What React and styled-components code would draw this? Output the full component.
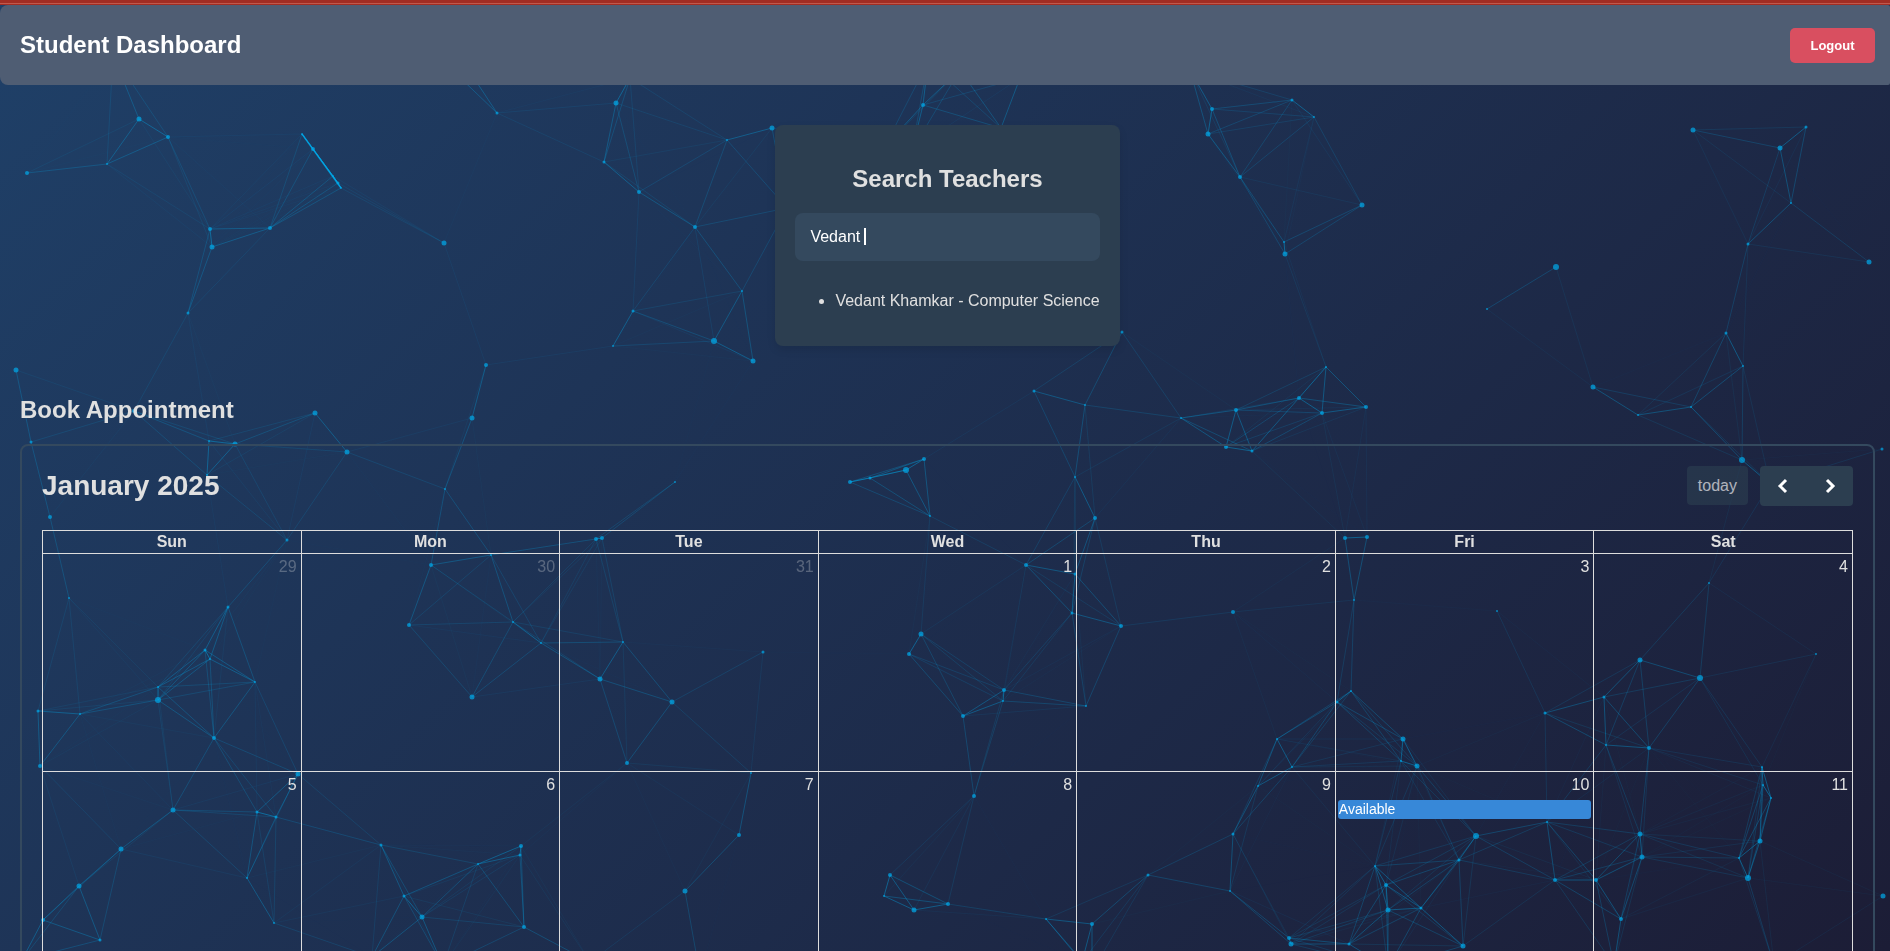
import React, { useState } from "react";
import styled, { createGlobalStyle } from "styled-components";

const GlobalStyle = createGlobalStyle`
  *, *::before, *::after { box-sizing: border-box; }
  body {
    margin: 0;
    background: #1c1d36;
    color: #e0e0e0;
    font-family: "Liberation Sans", Arial, sans-serif;
    font-size: 16px;
  }
`;

/* Particle field: [x, y, radius] */
const PARTICLES = [
  [113, 55, 2], [139, 119, 2.5], [168, 137, 2], [107, 164, 1], [27, 173, 2], [302, 134, 1],
  [313, 149, 2], [333, 176, 1], [338, 183, 1.5], [341, 188, 1], [270, 228, 2], [210, 229, 2],
  [212, 247, 2.5], [188, 313, 1.5], [444, 243, 2.5], [450, 68, 2], [466, 66, 2], [497, 113, 1.5],
  [616, 103, 2.5], [630, 78, 2], [604, 162, 1.5], [639, 192, 2], [727, 140, 1], [772, 128, 2.5],
  [787, 208, 2], [695, 227, 2], [742, 291, 1], [633, 311, 1.5], [613, 346, 1], [714, 341, 3],
  [753, 361, 2.5], [486, 365, 2], [923, 105, 2], [928, 62, 2], [960, 70, 2], [1001, 128, 2],
  [1020, 78, 2], [885, 146, 2], [912, 150, 2], [1122, 332, 1.5], [1034, 391, 1.5], [1085, 405, 1],
  [1181, 418, 1], [1236, 410, 2], [1226, 447, 2], [1252, 451, 1.5], [1299, 398, 2], [924, 459, 2],
  [906, 470, 3], [870, 478, 1.5], [850, 482, 2], [930, 516, 1], [1075, 477, 1], [1095, 518, 2],
  [1026, 565, 2], [1075, 574, 1.5], [1072, 613, 1.5], [1121, 626, 2], [1233, 612, 2],
  [921, 634, 2.5], [909, 654, 2], [1190, 70, 2], [1212, 109, 2], [1208, 134, 2.5],
  [1292, 100, 1.5], [1314, 117, 1], [1240, 177, 2], [1362, 205, 2.5], [1284, 242, 1],
  [1285, 254, 2.5], [1693, 130, 2.5], [1780, 148, 2.5], [1806, 127, 1.5], [1791, 203, 1],
  [1748, 244, 1.5], [1869, 262, 2.5], [1556, 267, 3], [1487, 309, 1], [1726, 333, 1.5],
  [1743, 366, 1], [1691, 407, 1], [1593, 387, 2.5], [1638, 415, 1], [1742, 460, 3],
  [1770, 484, 2], [1882, 449, 1.5], [1326, 367, 1], [1366, 407, 2], [1322, 413, 2],
  [134, 411, 2], [31, 442, 1.5], [16, 370, 2.5], [209, 441, 1], [235, 444, 2.5], [315, 413, 2.5],
  [347, 452, 2.5], [207, 475, 1], [50, 517, 2], [287, 540, 1.5], [69, 598, 1], [445, 489, 1],
  [472, 418, 2.5], [431, 565, 2], [409, 625, 2], [228, 607, 1.5], [205, 650, 1.5], [210, 659, 1],
  [255, 682, 1], [158, 687, 1], [158, 700, 3], [472, 697, 2.5], [38, 711, 1.5], [80, 714, 1],
  [40, 766, 2], [214, 738, 2], [298, 774, 2.5], [173, 810, 2.5], [257, 812, 1.5], [276, 817, 1.5],
  [121, 849, 2.5], [79, 886, 2.5], [43, 920, 2], [100, 940, 1.5], [247, 878, 1], [274, 923, 1],
  [381, 845, 1.5], [404, 896, 1.5], [422, 917, 2.5], [478, 864, 1], [22, 960, 2], [372, 957, 2],
  [443, 966, 2], [491, 555, 1], [513, 622, 1], [541, 643, 1], [600, 679, 2.5], [623, 642, 1],
  [672, 702, 2.5], [763, 652, 1.5], [627, 763, 2], [751, 773, 1], [739, 835, 2], [685, 891, 2.5],
  [521, 846, 2], [520, 855, 1.5], [524, 927, 2], [596, 539, 2], [602, 538, 2], [675, 482, 1],
  [1086, 706, 1], [1004, 690, 2], [1003, 701, 1], [963, 716, 2], [974, 796, 2], [890, 875, 2],
  [884, 896, 1], [914, 910, 2.5], [948, 904, 2], [1046, 919, 1], [1092, 924, 2], [1082, 962, 2],
  [1092, 972, 2], [590, 962, 2], [700, 975, 2], [1351, 691, 1], [1337, 702, 1.5], [1277, 739, 1],
  [1292, 767, 1], [1403, 739, 2.5], [1401, 761, 1], [1417, 766, 2.5], [1258, 786, 1],
  [1233, 834, 1.5], [1230, 891, 1], [1289, 938, 2], [1291, 944, 2.5], [1349, 944, 1.5],
  [1375, 866, 1], [1386, 885, 2], [1388, 910, 2.5], [1421, 908, 1.5], [1459, 860, 1.5],
  [1476, 836, 3], [1463, 946, 2.5], [1547, 822, 1], [1555, 880, 2], [1545, 713, 1.5],
  [1596, 880, 2], [1148, 875, 1.5], [1388, 968, 2], [1640, 660, 2.5], [1700, 678, 3],
  [1709, 583, 1], [1816, 654, 1], [1604, 697, 1.5], [1606, 745, 1], [1649, 748, 2],
  [1762, 767, 1], [1763, 785, 1], [1771, 798, 1], [1760, 841, 2.5], [1739, 858, 1],
  [1748, 878, 3], [1640, 834, 2.5], [1642, 857, 2.5], [1621, 919, 2], [1883, 896, 2.5],
  [1774, 965, 2], [1614, 965, 2], [1345, 538, 2], [1367, 537, 2], [1354, 600, 1], [1497, 611, 1],
];

const LINK_DISTANCE = 150;

const LINKS = PARTICLES.flatMap(([x1, y1], i) =>
  PARTICLES.slice(i + 1).flatMap(([x2, y2]) => {
    const distance = Math.hypot(x2 - x1, y2 - y1);
    if (distance >= LINK_DISTANCE) return [];
    return [{ x1, y1, x2, y2, opacity: 0.5 * (1 - distance / LINK_DISTANCE) }];
  })
);

const Backdrop = styled.div`
  position: fixed;
  inset: 0;
  z-index: -1;
  background: linear-gradient(135deg, #1f4068, #1c1d36);

  svg { display: block; width: 100%; height: 100%; }
`;

function ParticleField() {
  return (
    <Backdrop aria-hidden="true">
      <svg>
        <g stroke="#00aaea">
          {LINKS.map((link, i) => (
            <line key={i} x1={link.x1} y1={link.y1} x2={link.x2} y2={link.y2} strokeOpacity={link.opacity} />
          ))}
          <line x1="302" y1="134" x2="341" y2="188" strokeOpacity="0.7" strokeWidth="1.5" />
        </g>
        <g fill="#00aaea" fillOpacity="0.7">
          {PARTICLES.map(([x, y, r], i) => (
            <circle key={i} cx={x} cy={y} r={r} />
          ))}
        </g>
      </svg>
    </Backdrop>
  );
}

const Page = styled.div`
  height: 100vh;
  overflow-y: auto;
  scrollbar-width: none;
`;

const TopStrip = styled.div`
  height: 5px;
  background: linear-gradient(#a12d23 3px, #c0594c 3px, #c0594c 4px, #a12d23 4px);
`;

const Header = styled.header`
  display: flex;
  align-items: center;
  justify-content: space-between;
  height: 80px;
  padding: 0 15px 0 20px;
  border-radius: 8px 2px 2px 8px;
  background: #4f5d73;
`;

const Title = styled.h1`
  margin: 0;
  color: #fff;
  font-size: 24px;
  line-height: 28px;
`;

const LogoutButton = styled.button`
  min-width: 85px;
  height: 35px;
  padding: 0 20px;
  border: 0;
  border-radius: 5px;
  background: #d94f60;
  color: #fff;
  font: bold 13px/15px "Liberation Sans", Arial, sans-serif;
  cursor: pointer;
`;

const Main = styled.main`
  display: flex;
  flex-direction: column;
  padding: 40px 15px 40px 20px;
`;

const SectionTitle = styled.h2`
  margin: 0 0 20px;
  font-size: 24px;
  line-height: 28px;
  text-align: ${(p) => p.$align || "left"};
`;

const SearchCard = styled.section`
  align-self: center;
  margin-bottom: 50px;
  padding: 40px 20px 36px;
  border-radius: 8px;
  background: #2c3e50;
  box-shadow: 0 4px 8px rgba(0, 0, 0, 0.1);
`;

const SearchField = styled.div`
  position: relative;
  display: flex;
  margin-bottom: 31px;
`;

const SearchInput = styled.input`
  flex: 1;
  width: 100%;
  min-width: 0;
  height: 48px;
  padding: 0 15px;
  border: 0;
  border-radius: 8px;
  outline: 0;
  background: #34495e;
  color: #fff;
  caret-color: transparent;
  font: 16px "Liberation Sans", Arial, sans-serif;
`;

const Caret = styled.span`
  position: absolute;
  left: 69px;
  top: 15px;
  width: 2px;
  height: 17px;
  background: #fff;
`;

const TeacherList = styled.ul`
  margin: 0;
  padding-left: 40px;
  line-height: 18px;
`;

const Calendar = styled.div`
  padding: 20px;
  border: 2px solid #34495e;
  border-radius: 8px;
`;

const Toolbar = styled.div`
  display: flex;
  align-items: center;
  justify-content: space-between;
  height: 40px;
  margin-bottom: 24px;
`;

const MonthTitle = styled.h2`
  margin: 0;
  font-size: 28px;
  line-height: 32px;
`;

const ToolbarActions = styled.div`
  display: flex;
  align-items: flex-start;
  gap: 12px;
`;

const TodayButton = styled.button`
  height: 39px;
  padding: 0 11px;
  border: 0;
  border-radius: 4px;
  background: #2c3e50;
  color: #fff;
  font: 16px "Liberation Sans", Arial, sans-serif;
  opacity: 0.65;
`;

const ArrowGroup = styled.div`
  display: flex;
  gap: 1px;
  overflow: hidden;
  border-radius: 4px;
  background: #2c3e50;
`;

const ArrowButton = styled.button`
  display: flex;
  align-items: center;
  justify-content: center;
  width: 46px;
  height: 40px;
  padding: 0;
  border: 0;
  background: transparent;
  color: #fff;
  cursor: pointer;
`;

const Grid = styled.table`
  width: 100%;
  border-collapse: collapse;
  table-layout: fixed;
`;

const DayHead = styled.th`
  height: 23px;
  padding: 0;
  border: 1px solid #ddd;
  font-weight: bold;
  line-height: 18px;
`;

const DayCell = styled.td`
  height: 218px;
  padding: 0;
  border: 1px solid #ddd;
  vertical-align: top;
`;

const DayNumber = styled.div`
  padding: 4px;
  line-height: 18px;
  text-align: right;
  opacity: ${(p) => (p.$outside ? 0.3 : 1)};
`;

const EventBar = styled.a`
  display: block;
  height: 19px;
  margin: 2px 2px 0;
  padding: 0 1px;
  border-radius: 3px;
  background: #3788d8;
  color: #fff;
  font-size: 14px;
  line-height: 18px;
  text-decoration: none;
`;

const WEEKDAYS = ["Sun", "Mon", "Tue", "Wed", "Thu", "Fri", "Sat"];
const EVENTS = { 10: "Available" };
const WEEK_COUNT = 2;

/* January 2025 starts on a Wednesday, so the grid opens with three December days. */
const WEEKS = Array.from({ length: WEEK_COUNT }, (_, week) =>
  Array.from({ length: 7 }, (_, weekday) => {
    const offset = week * 7 + weekday - 2;
    if (offset < 1) return { day: offset + 31, outside: true };
    return { day: offset, outside: false };
  })
);

function Chevron({ points }) {
  return (
    <svg width="24" height="24" viewBox="0 0 24 24" fill="none" stroke="currentColor" strokeWidth="3" aria-hidden="true">
      <polyline points={points} />
    </svg>
  );
}

export default function App() {
  const [query, setQuery] = useState("Vedant ");

  return (
    <>
      <GlobalStyle />
      <ParticleField />
      <Page>
        <TopStrip />
        <Header>
          <Title>Student Dashboard</Title>
          <LogoutButton type="button">Logout</LogoutButton>
        </Header>
        <Main>
          <SearchCard>
            <SectionTitle $align="center">Search Teachers</SectionTitle>
            <SearchField>
              <SearchInput
                type="text"
                aria-label="Search teachers"
                size="1"
                value={query}
                onChange={(e) => setQuery(e.target.value)}
              />
              <Caret />
            </SearchField>
            <TeacherList>
              <li>Vedant Khamkar - Computer Science</li>
            </TeacherList>
          </SearchCard>

          <SectionTitle>Book Appointment</SectionTitle>
          <Calendar>
            <Toolbar>
              <MonthTitle>January 2025</MonthTitle>
              <ToolbarActions>
                <TodayButton type="button" disabled>today</TodayButton>
                <ArrowGroup>
                  <ArrowButton type="button" aria-label="Previous month">
                    <Chevron points="15,6 9,12 15,18" />
                  </ArrowButton>
                  <ArrowButton type="button" aria-label="Next month">
                    <Chevron points="9,6 15,12 9,18" />
                  </ArrowButton>
                </ArrowGroup>
              </ToolbarActions>
            </Toolbar>
            <Grid>
              <thead>
                <tr>
                  {WEEKDAYS.map((name) => (
                    <DayHead key={name} scope="col">{name}</DayHead>
                  ))}
                </tr>
              </thead>
              <tbody>
                {WEEKS.map((week, i) => (
                  <tr key={i}>
                    {week.map(({ day, outside }) => (
                      <DayCell key={day}>
                        <DayNumber $outside={outside}>{day}</DayNumber>
                        {!outside && EVENTS[day] && <EventBar href="#event">{EVENTS[day]}</EventBar>}
                      </DayCell>
                    ))}
                  </tr>
                ))}
              </tbody>
            </Grid>
          </Calendar>
        </Main>
      </Page>
    </>
  );
}
